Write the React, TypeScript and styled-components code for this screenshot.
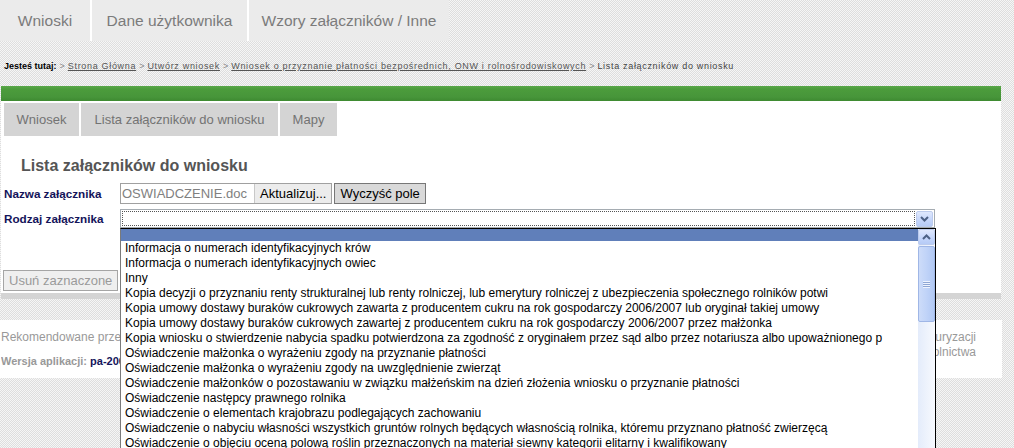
import React from "react";
import styled, { createGlobalStyle } from "styled-components";

const Global = createGlobalStyle`
  html, body { margin: 0; padding: 0; overflow: hidden; }
  body {
    width: 1014px;
    height: 448px;
    font-family: "Liberation Sans", Arial, sans-serif;
    background: repeating-conic-gradient(#dedede 0% 25%, #f6f6f6 0% 50%) 0 0 / 2px 2px;
  }
`;

const Page = styled.div`
  display: flex;
  flex-direction: column;
  width: 1002px;
`;

const TopNav = styled.nav`
  display: flex;
  gap: 2px;
  align-self: flex-start;
  height: 41px;
  background: #fff;
`;

const TopTab = styled.a<{ $w: number }>`
  display: flex;
  align-items: center;
  justify-content: center;
  width: ${(p) => p.$w}px;
  background: #ebebeb;
  color: #7b7b7b;
  font-size: 15.5px;
  text-decoration: none;
`;

const Crumbs = styled.div`
  box-sizing: border-box;
  height: 45px;
  padding: 19px 4px 0;
  font-size: 9px;
  line-height: 12px;
  color: #777;
  white-space: nowrap;
`;

const CrumbLabel = styled.b`
  color: #000;
`;

const CrumbLink = styled.a`
  color: #555;
  text-decoration: underline;
  letter-spacing: 0.68px;
`;

const CrumbSep = styled.span`
  color: #888;
  margin: 0 3px;
`;

const CrumbCurrent = styled.span`
  color: #444;
  letter-spacing: 0.68px;
`;

const Panel = styled.section`
  margin-left: 1px;
  width: 1000px;
  background: #fff;
  border-top: 15px solid #4b9a3b;
  border-bottom: 6px solid #d4d4d4;
  padding: 2px 0 2px 1px;
  box-sizing: border-box;
  position: relative;
  &::before {
    content: "";
    position: absolute;
    left: 0;
    right: 0;
    top: -15px;
    height: 15px;
    background: linear-gradient(#5aa84a 0, #4c9c3c 3px, #47953a 11px, #3e8a31 15px);
  }
`;

const SubTabs = styled.div`
  display: flex;
  gap: 2px;
  margin-left: 2px;
  height: 33px;
`;

const SubTab = styled.a<{ $w: number }>`
  display: flex;
  align-items: center;
  justify-content: center;
  width: ${(p) => p.$w}px;
  background: #d4d4d4;
  color: #737373;
  font-size: 13px;
  text-decoration: none;
`;

const Heading = styled.h2`
  margin: 20px 0 8px 19px;
  font-size: 16px;
  line-height: 19px;
  font-weight: bold;
  color: #555;
`;

const Form = styled.div`
  display: grid;
  grid-template-columns: 116px 1fr;
  grid-template-rows: 21px 19px;
  row-gap: 5px;
  padding-left: 2px;
`;

const Label = styled.label`
  display: flex;
  align-items: center;
  font-size: 11.7px;
  font-weight: bold;
  color: #14145a;
`;

const FileRow = styled.div`
  display: flex;
  gap: 2px;
  height: 21px;
`;

const FileBox = styled.div`
  display: flex;
  border: 1px solid #a0a0a0;
  box-sizing: border-box;
`;

const FileName = styled.span`
  width: 132px;
  padding-left: 1px;
  font-size: 13px;
  line-height: 19px;
  color: #808080;
  background: #fff;
`;

const Button = styled.button<{ $tone?: "light" | "dark" | "disabled" }>`
  font-family: "Liberation Sans", Arial, sans-serif;
  font-size: 13px;
  padding: 0 5px;
  margin: 0;
  height: ${(p) => (p.$tone === "light" ? "19px" : "21px")};
  color: ${(p) => (p.$tone === "disabled" ? "#9a9a9a" : "#000")};
  background: ${(p) =>
    p.$tone === "dark" ? "#d9d9d9" : p.$tone === "disabled" ? "#efefef" : "#ececec"};
  border: 1px solid
    ${(p) => (p.$tone === "dark" ? "#777" : p.$tone === "disabled" ? "#a5a5a5" : "#c8c8c8")};
  border-width: ${(p) => (p.$tone === "light" ? "0 0 0 1px" : "1px")};
  border-radius: 0;
`;

const SelectWrap = styled.div`
  position: relative;
  width: 815px;
  height: 19px;
`;

const SelectBox = styled.div`
  box-sizing: border-box;
  height: 19px;
  border: 1px solid #a5acb2;
  background: #fff;
  display: flex;
  padding: 1px 1px 0 1px;
`;

const Focus = styled.div`
  flex: 1;
  height: 15px;
  border: 1px dotted #555;
  box-sizing: border-box;
  margin-right: 1px;
`;

const XpButton = styled.div<{ $h: number }>`
  width: 17px;
  height: ${(p) => p.$h}px;
  box-sizing: border-box;
  border: 1px solid #bccbed;
  border-radius: 2px;
  background: linear-gradient(#dfe8fd, #c4d5fb 60%, #b6cbf6);
  display: flex;
  align-items: center;
  justify-content: center;
`;

const DropList = styled.div`
  position: absolute;
  z-index: 10;
  top: 19px;
  left: 0;
  width: 816px;
  height: 222px;
  box-sizing: border-box;
  border: 1px solid #000;
  border-left-color: #7a7a7a;
  background: #fff;
  display: flex;
`;

const Options = styled.ul`
  flex: 1;
  margin: 0;
  padding: 0;
  list-style: none;
  overflow: hidden;
`;

const Option = styled.li<{ $selected?: boolean }>`
  height: ${(p) => (p.$selected ? "12px" : "15px")};
  line-height: 15px;
  padding-left: 4px;
  font-size: 12px;
  color: #000;
  white-space: nowrap;
  background: ${(p) => (p.$selected ? "#607fba" : "transparent")};
`;

const ScrollBar = styled.div`
  width: 17px;
  display: flex;
  flex-direction: column;
  gap: 1px;
  background: linear-gradient(90deg, #e4ecfb, #f7f9fe);
`;

const Thumb = styled.div`
  height: 76px;
  box-sizing: border-box;
  border: 1px solid #9fb6e6;
  border-radius: 2px;
  background: linear-gradient(90deg, #cddcf9, #c0d3f8 50%, #b2c9f4);
  display: flex;
  align-items: center;
  justify-content: center;
`;

const Grip = styled.div`
  width: 7px;
  height: 7px;
  background: repeating-linear-gradient(#eef3fe 0 1px, #8ea6d4 1px 2px);
`;

const DeleteRow = styled.div`
  margin-top: 42px;
  padding-left: 1px;
`;

const Footer = styled.footer`
  margin-top: 21px;
  height: 58px;
  box-sizing: border-box;
  padding: 10px 26px 0 1px;
  background: #fff;
  display: flex;
  justify-content: space-between;
  font-size: 12px;
  line-height: 15px;
  color: #999;
`;

const FooterLeft = styled.div`
  display: flex;
  flex-direction: column;
  gap: 9px;
  width: 119px;
  overflow: hidden;
  white-space: nowrap;
`;

const FooterRight = styled.div`
  display: flex;
  flex-direction: column;
  align-items: flex-end;
  width: 40px;
  overflow: hidden;
  white-space: nowrap;
`;

const Version = styled.div`
  font-size: 11px;
  font-weight: bold;
  color: #999;
`;

const VersionNo = styled.span`
  color: #14145a;
`;

const Chevron = ({ up }: { up?: boolean }) => (
  <svg width="9" height="6" viewBox="0 0 9 6">
    <path
      d={up ? "M1 5 L4.5 1.5 L8 5" : "M1 1 L4.5 4.5 L8 1"}
      fill="none"
      stroke="#4d6185"
      strokeWidth="2"
    />
  </svg>
);

const options = [
  "Informacja o numerach identyfikacyjnych krów",
  "Informacja o numerach identyfikacyjnych owiec",
  "Inny",
  "Kopia decyzji o przyznaniu renty strukturalnej lub renty rolniczej, lub emerytury rolniczej z ubezpieczenia społecznego rolników potwi",
  "Kopia umowy dostawy buraków cukrowych zawarta z producentem cukru na rok gospodarczy 2006/2007 lub oryginał takiej umowy",
  "Kopia umowy dostawy buraków cukrowych zawartej z producentem cukru na rok gospodarczy 2006/2007 przez małżonka",
  "Kopia wniosku o stwierdzenie nabycia spadku potwierdzona za zgodność z oryginałem przez sąd albo przez notariusza albo upoważnionego p",
  "Oświadczenie małżonka o wyrażeniu zgody na przyznanie płatności",
  "Oświadczenie małżonka o wyrażeniu zgody na uwzględnienie zwierząt",
  "Oświadczenie małżonków o pozostawaniu w związku małżeńskim na dzień złożenia wniosku o przyznanie płatności",
  "Oświadczenie następcy prawnego rolnika",
  "Oświadczenie o elementach krajobrazu podlegających zachowaniu",
  "Oświadczenie o nabyciu własności wszystkich gruntów rolnych będących własnością rolnika, któremu przyznano płatność zwierzęcą",
  "Oświadczenie o objęciu oceną polową roślin przeznaczonych na materiał siewny kategorii elitarny i kwalifikowany",
];

export default function App() {
  return (
    <>
      <Global />
      <Page>
        <TopNav>
          <TopTab $w={90}>Wnioski</TopTab>
          <TopTab $w={155}>Dane użytkownika</TopTab>
          <TopTab $w={200}>Wzory załączników / Inne</TopTab>
        </TopNav>
        <Crumbs>
          <CrumbLabel>Jesteś tutaj:</CrumbLabel>
          <CrumbSep>&gt;</CrumbSep>
          <CrumbLink>Strona Główna</CrumbLink>
          <CrumbSep>&gt;</CrumbSep>
          <CrumbLink>Utwórz wniosek</CrumbLink>
          <CrumbSep>&gt;</CrumbSep>
          <CrumbLink>Wniosek o przyznanie płatności bezpośrednich, ONW i rolnośrodowiskowych</CrumbLink>
          <CrumbSep>&gt;</CrumbSep>
          <CrumbCurrent>Lista załączników do wniosku</CrumbCurrent>
        </Crumbs>
        <Panel>
          <SubTabs>
            <SubTab $w={75}>Wniosek</SubTab>
            <SubTab $w={197}>Lista załączników do wniosku</SubTab>
            <SubTab $w={57}>Mapy</SubTab>
          </SubTabs>
          <Heading>Lista załączników do wniosku</Heading>
          <Form>
            <Label>Nazwa załącznika</Label>
            <FileRow>
              <FileBox>
                <FileName>OSWIADCZENIE.doc</FileName>
                <Button $tone="light">Aktualizuj...</Button>
              </FileBox>
              <Button $tone="dark">Wyczyść pole</Button>
            </FileRow>
            <Label>Rodzaj załącznika</Label>
            <SelectWrap>
              <SelectBox>
                <Focus />
                <XpButton $h={16}>
                  <Chevron />
                </XpButton>
              </SelectBox>
              <DropList>
                <Options>
                  <Option $selected />
                  {options.map((o) => (
                    <Option key={o}>{o}</Option>
                  ))}
                </Options>
                <ScrollBar>
                  <XpButton $h={16}>
                    <Chevron up />
                  </XpButton>
                  <Thumb>
                    <Grip />
                  </Thumb>
                </ScrollBar>
              </DropList>
            </SelectWrap>
          </Form>
          <DeleteRow>
            <Button $tone="disabled" disabled>
              Usuń zaznaczone
            </Button>
          </DeleteRow>
        </Panel>
        <Footer>
          <FooterLeft>
            <div>Rekomendowane przeglądarki</div>
            <Version>
              Wersja aplikacji: <VersionNo>pa-2007</VersionNo>
            </Version>
          </FooterLeft>
          <FooterRight>
            <span>Agencja Restrukturyzacji</span>
            <span>i Modernizacji Rolnictwa</span>
          </FooterRight>
        </Footer>
      </Page>
    </>
  );
}
